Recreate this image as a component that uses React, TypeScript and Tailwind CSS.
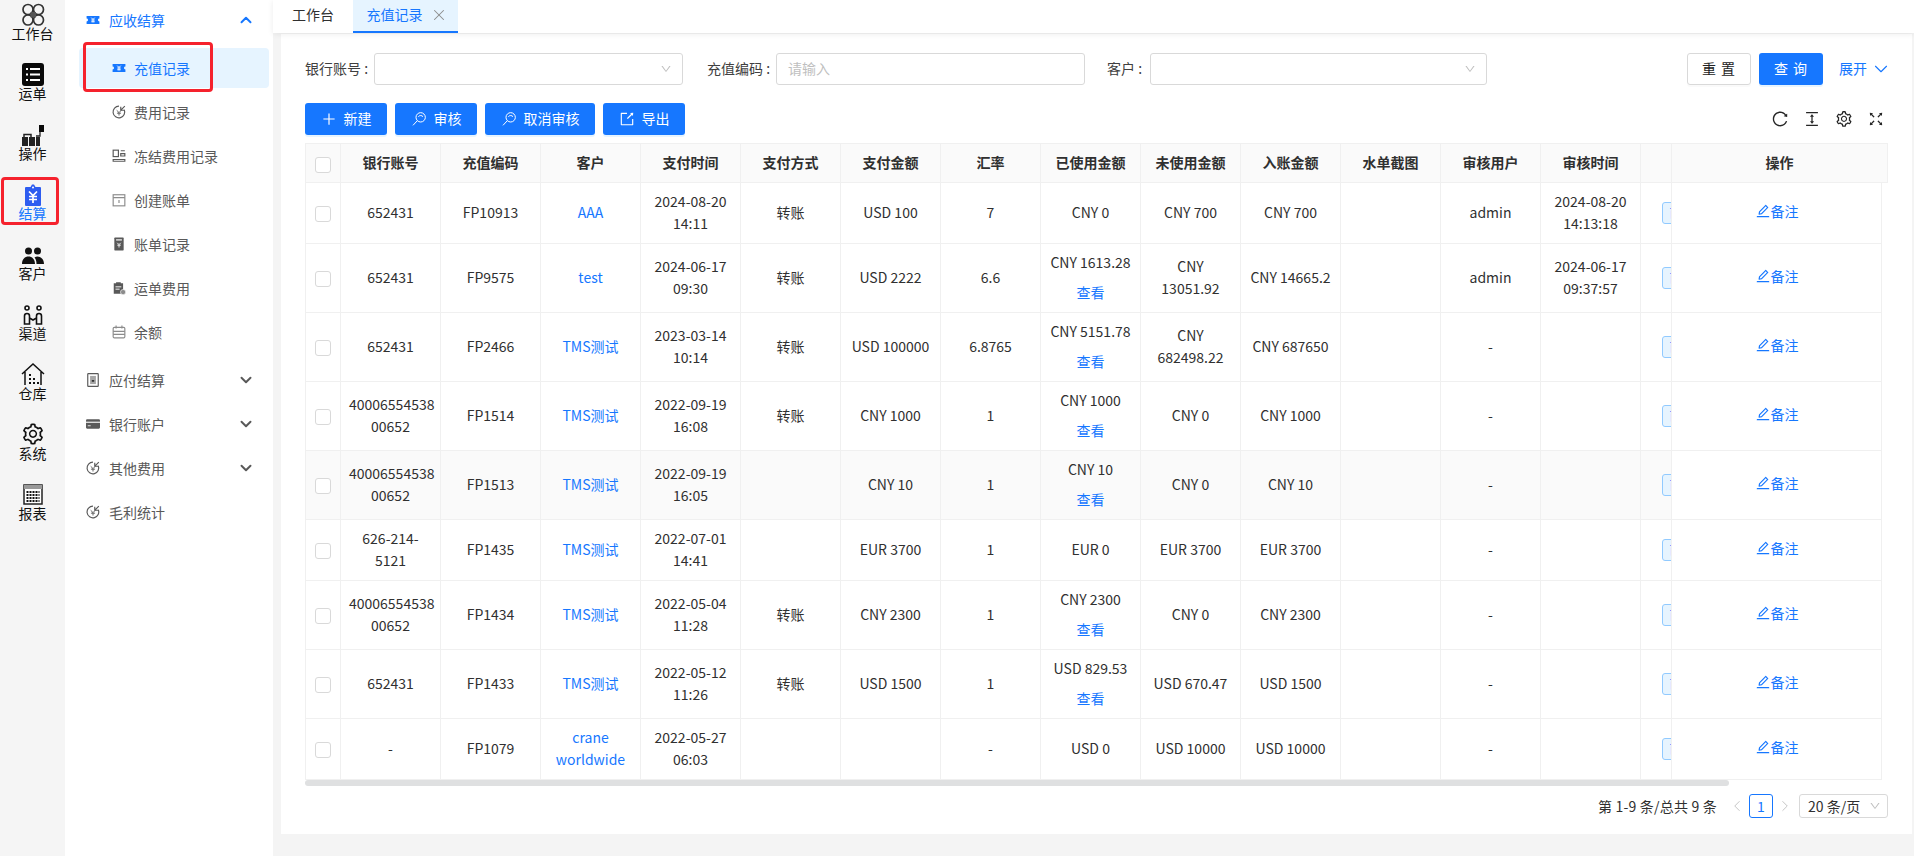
import { ChevronDown, ChevronUp, X, ChevronLeft, ChevronRight } from 'lucide-react';
import { AiOutlineColumnHeight, AiOutlineDown, AiOutlineEdit, AiOutlineExport, AiOutlineFullscreen, AiOutlinePlus, AiOutlineReload, AiOutlineSetting } from 'react-icons/ai';
import type { ReactNode } from 'react';

function Svg({ children, size = 24, className = '' }: { children: ReactNode; size?: number; className?: string }) {
  return (
    <svg width={size} height={size} viewBox="0 0 24 24" fill="none" className={className}>
      {children}
    </svg>
  );
}

const railIcons: Record<string, ReactNode> = {
  workbench: (
    <Svg>
      <circle cx="7" cy="7.5" r="5" stroke="#333" strokeWidth="1.7" />
      <circle cx="17.5" cy="7.5" r="5" stroke="#333" strokeWidth="1.7" />
      <circle cx="7" cy="18" r="5" stroke="#333" strokeWidth="1.7" />
      <circle cx="17.5" cy="18" r="5" stroke="#333" strokeWidth="1.7" />
      <rect x="9.5" y="10" width="5.5" height="5.5" fill="#555" />
    </Svg>
  ),
  waybill: (
    <Svg>
      <rect x="1" y="1" width="22" height="23" rx="3" fill="#0a0a0a" />
      <path d="M5 7h2M9 7h10M5 12.5h2M9 12.5h10M5 18h2M9 18h10" stroke="#fff" strokeWidth="2" />
    </Svg>
  ),
  operate: (
    <Svg>
      <rect x="18" y="3" width="5" height="7" fill="#0a0a0a" />
      <path d="M19 10v4H15" stroke="#222" strokeWidth="1.3" />
      <path d="M1 24v-9h6v9zM8 24v-9h6v9zM15 24v-9h4v9z" fill="#222" />
      <path d="M3 15v-2.5h7V15" stroke="#222" strokeWidth="1.5" />
    </Svg>
  ),
  settle: (
    <Svg>
      <path d="M5 5h4.5l1.500-2.500h2L14.500 5H19a1 1 0 0 1 1 1v17a1 1 0 0 1-1 1H5a1 1 0 0 1-1-1V6a1 1 0 0 1 1-1z" fill="#2d5cf0" />
      <circle cx="12" cy="5.5" r="1" fill="#fff" />
      <path d="M8 9.5l4 4 4-4M12 13.5V21M8 14.5h8M8 17.5h8" stroke="#fff" strokeWidth="1.7" />
    </Svg>
  ),
  customer: (
    <Svg>
      <circle cx="7.5" cy="9" r="3.5" fill="#111" />
      <circle cx="16.5" cy="9" r="3.5" fill="#111" />
      <path d="M1 22c0-5 3-7.5 6.5-7.5S14 17 14 22H1zM15.500 22c0-3-.7-5-2-6.500 4-2.500 9.500.5 9.500 6.500h-7.500z" fill="#111" />
    </Svg>
  ),
  channel: (
    <Svg>
      <circle cx="6" cy="6" r="2" stroke="#111" strokeWidth="1.6" />
      <circle cx="18" cy="6" r="2" stroke="#111" strokeWidth="1.6" />
      <path d="M3.5 22v-8a2.5 2.5 0 0 1 5 0v8zM15.5 22v-8a2.5 2.5 0 0 1 5 0v8zM8.5 16l3.5 2 3.5-2" stroke="#111" strokeWidth="1.6" />
    </Svg>
  ),
  warehouse: (
    <Svg>
      <path d="M1 12L12 2l11 10M4 10v13M20 10v13" stroke="#111" strokeWidth="1.5" />
      <path d="M8 12h2v2H8zM8 16h2v2H8zM12 16h2v2h-2zM8 20h2v2H8zM12 20h2v2h-2zM16 20h2v2h-2z" fill="#111" />
    </Svg>
  ),
  system: <AiOutlineSetting size={24} color="#111" />,
  report: (
    <Svg>
      <rect x="3" y="3" width="18" height="19" fill="#fff" stroke="#222" strokeWidth="1.5" />
      <rect x="3" y="3" width="18" height="4" fill="#999" />
      <path d="M5.5 10h13M5.5 13h13M5.5 16h13M5.5 19h13" stroke="#111" strokeWidth="1.8" strokeDasharray="2 1" />
    </Svg>
  ),
};

const rail = [
  { key: 'workbench', label: '工作台' },
  { key: 'waybill', label: '运单' },
  { key: 'operate', label: '操作' },
  { key: 'settle', label: '结算', active: true },
  { key: 'customer', label: '客户' },
  { key: 'channel', label: '渠道' },
  { key: 'warehouse', label: '仓库' },
  { key: 'system', label: '系统' },
  { key: 'report', label: '报表' },
];

function MenuIcon({ kind, active }: { kind: string; active?: boolean }) {
  const c = active ? '#1677ff' : '#595959';
  if (kind === 'ticket')
    return (
      <Svg size={14}>
        <path d="M1 5h22v4.5a2.5 2.5 0 0 0 0 5V19H1v-4.5a2.5 2.5 0 0 0 0-5z" fill={c} />
        <path d="M9 8l3 3 3-3M12 11v5M9 12h6M9 15h6" stroke="#fff" strokeWidth="1.6" />
      </Svg>
    );
  if (kind === 'back')
    return (
      <Svg size={14}>
        <path d="M21 8a10 10 0 1 1-9-6" stroke={c} strokeWidth="2" />
        <path d="M22 2l-6 6M15 3v6h6" stroke={c} strokeWidth="2" />
        <path d="M8 9l4 4 4-4M12 13v5M8.5 14h7" stroke={c} strokeWidth="1.6" />
      </Svg>
    );
  if (kind === 'freeze')
    return (
      <Svg size={14}>
        <rect x="2" y="2" width="9" height="11" stroke={c} strokeWidth="2" />
        <path d="M15 3h7M15 8h7v4h-7zM2 18h20v3H2z" stroke={c} strokeWidth="2" />
      </Svg>
    );
  if (kind === 'bill')
    return (
      <Svg size={14}>
        <rect x="2" y="3" width="20" height="19" stroke="#8c8c8c" strokeWidth="2" />
        <path d="M2 8h20M12 12v5" stroke="#8c8c8c" strokeWidth="2" />
      </Svg>
    );
  if (kind === 'record')
    return (
      <Svg size={14}>
        <rect x="4" y="1" width="16" height="22" rx="1" fill="#595959" />
        <rect x="7" y="4" width="10" height="2" fill="#fff" />
        <path d="M9 10l3 3 3-3M12 13v5M9 14h6" stroke="#fff" strokeWidth="1.5" />
      </Svg>
    );
  if (kind === 'waybill')
    return (
      <Svg size={14}>
        <path d="M3 4h4V2h8v2h4v18H3z" fill="#595959" />
        <path d="M6 10h10M6 14h7" stroke="#fff" strokeWidth="1.6" />
        <circle cx="19" cy="19" r="4.5" fill="#8c8c8c" stroke="#fff" />
      </Svg>
    );
  if (kind === 'balance')
    return (
      <Svg size={14}>
        <rect x="2" y="4" width="20" height="18" rx="2" stroke="#8c8c8c" strokeWidth="2" />
        <path d="M7 1v5M17 1v5M2 11h20M2 16h20" stroke="#8c8c8c" strokeWidth="2" />
      </Svg>
    );
  if (kind === 'payable')
    return (
      <Svg size={14}>
        <rect x="3" y="1" width="18" height="22" rx="1" stroke="#595959" strokeWidth="2" />
        <rect x="7" y="5" width="10" height="14" fill="#a6a6a6" />
        <path d="M10 12h4v3h-4z" fill="#333" />
      </Svg>
    );
  return (
    <Svg size={14}>
      <rect x="0" y="4" width="24" height="16" rx="2" fill="#595959" />
      <rect x="0" y="8" width="24" height="2" fill="#f5f5f5" />
      <path d="M3 15h5" stroke="#f5f5f5" strokeWidth="1.5" />
    </Svg>
  );
}

const subItems = [
  { label: '充值记录', icon: 'ticket', active: true },
  { label: '费用记录', icon: 'back' },
  { label: '冻结费用记录', icon: 'freeze' },
  { label: '创建账单', icon: 'bill' },
  { label: '账单记录', icon: 'record' },
  { label: '运单费用', icon: 'waybill' },
  { label: '余额', icon: 'balance' },
];

const groups = [
  { label: '应付结算', icon: 'payable', arrow: true },
  { label: '银行账户', icon: 'card', arrow: true },
  { label: '其他费用', icon: 'back', arrow: true },
  { label: '毛利统计', icon: 'back', arrow: false },
];

const columns = ['银行账号', '充值编码', '客户', '支付时间', '支付方式', '支付金额', '汇率', '已使用金额', '未使用金额', '入账金额', '水单截图', '审核用户', '审核时间'];

type Row = { bank: string; code: string; customer: string; paid: string; method: string; amount: string; rate: string; used: string; view?: boolean; unused: string; credited: string; user: string; auditTime: string };

const rows: Row[] = [
  { bank: '652431', code: 'FP10913', customer: 'AAA', paid: '2024-08-20\n14:11', method: '转账', amount: 'USD 100', rate: '7', used: 'CNY 0', unused: 'CNY 700', credited: 'CNY 700', user: 'admin', auditTime: '2024-08-20\n14:13:18' },
  { bank: '652431', code: 'FP9575', customer: 'test', paid: '2024-06-17\n09:30', method: '转账', amount: 'USD 2222', rate: '6.6', used: 'CNY 1613.28', view: true, unused: 'CNY\n13051.92', credited: 'CNY 14665.2', user: 'admin', auditTime: '2024-06-17\n09:37:57' },
  { bank: '652431', code: 'FP2466', customer: 'TMS测试', paid: '2023-03-14\n10:14', method: '转账', amount: 'USD 100000', rate: '6.8765', used: 'CNY 5151.78', view: true, unused: 'CNY\n682498.22', credited: 'CNY 687650', user: '-', auditTime: '' },
  { bank: '40006554538\n00652', code: 'FP1514', customer: 'TMS测试', paid: '2022-09-19\n16:08', method: '转账', amount: 'CNY 1000', rate: '1', used: 'CNY 1000', view: true, unused: 'CNY 0', credited: 'CNY 1000', user: '-', auditTime: '' },
  { bank: '40006554538\n00652', code: 'FP1513', customer: 'TMS测试', paid: '2022-09-19\n16:05', method: '', amount: 'CNY 10', rate: '1', used: 'CNY 10', view: true, unused: 'CNY 0', credited: 'CNY 10', user: '-', auditTime: '' },
  { bank: '626-214-\n5121', code: 'FP1435', customer: 'TMS测试', paid: '2022-07-01\n14:41', method: '', amount: 'EUR 3700', rate: '1', used: 'EUR 0', unused: 'EUR 3700', credited: 'EUR 3700', user: '-', auditTime: '' },
  { bank: '40006554538\n00652', code: 'FP1434', customer: 'TMS测试', paid: '2022-05-04\n11:28', method: '转账', amount: 'CNY 2300', rate: '1', used: 'CNY 2300', view: true, unused: 'CNY 0', credited: 'CNY 2300', user: '-', auditTime: '' },
  { bank: '652431', code: 'FP1433', customer: 'TMS测试', paid: '2022-05-12\n11:26', method: '转账', amount: 'USD 1500', rate: '1', used: 'USD 829.53', view: true, unused: 'USD 670.47', credited: 'USD 1500', user: '-', auditTime: '' },
  { bank: '-', code: 'FP1079', customer: 'crane\nworldwide', paid: '2022-05-27\n06:03', method: '', amount: '', rate: '-', used: 'USD 0', unused: 'USD 10000', credited: 'USD 10000', user: '-', auditTime: '' },
];

const td = 'border-b border-r border-[#f0f0f0] px-2 pt-[7px] pb-[9px] text-center align-middle whitespace-pre-line leading-[22px]';

function Checkbox() {
  return <span className="inline-block w-4 h-4 bg-white border border-[#d9d9d9] rounded-[3px] align-middle" />;
}

function SelectBox({ className }: { className: string }) {
  return (
    <div className={`h-8 border border-[#d9d9d9] rounded-[3px] bg-white flex items-center justify-end pr-[10px] ${className}`}>
      <AiOutlineDown size={12} className="text-[#bfbfbf]" />
    </div>
  );
}

function ToolButton({ icon, label, className }: { icon: ReactNode; label: string; className: string }) {
  return (
    <button className={`h-8 bg-[#1677ff] text-white rounded-[3px] flex items-center justify-center gap-[7px] shadow-[0_2px_0_rgba(5,145,255,0.1)] ${className}`}>
      {icon}
      <span className="pb-[2px]">{label}</span>
    </button>
  );
}

const searchIcon = (
  <svg width="16" height="16" viewBox="0 0 24 24" fill="none" stroke="#fff" strokeWidth="1.5">
    <circle cx="14.5" cy="9.5" r="7" />
    <path d="M9.5 14.500L3 21.500M11 8.500a4.500 4.500 0 0 1 7 0" />
  </svg>
);

export default function App() {
  return (
    <div className="w-[1914px] h-[856px] flex overflow-hidden bg-[#f4f4f4] text-[14px] text-[#303030] relative" style={{ fontFamily: '"Noto Sans CJK SC", "Noto Sans", sans-serif' }}>
      <aside className="w-[65px] shrink-0 bg-[#f5f5f5] flex flex-col items-center">
        {rail.map((item) => (
          <div key={item.key} className={`h-[60px] w-full flex flex-col items-center pt-[2px] leading-5 ${item.active ? 'text-[#1677ff]' : 'text-[#111]'}`}>
            {railIcons[item.key]}
            <span className="-mt-[3px]">{item.label}</span>
          </div>
        ))}
      </aside>

      <nav className="w-[208px] shrink-0 bg-white text-[#595959]">
        <div className="h-10 flex items-center pl-[21px] pr-[18px] text-[#1677ff]">
          <MenuIcon kind="ticket" active />
          <span className="ml-[9px] flex-1">应收结算</span>
          <ChevronUp size={18} strokeWidth={2.6} />
        </div>
        <div className="mt-2 flex flex-col gap-1 ml-[14px] mr-1">
          {subItems.map((s) => (
            <div key={s.label} className={`h-10 rounded-[4px] flex items-center pl-[33px] gap-2 ${s.active ? 'bg-[#e6f4ff] text-[#1677ff]' : ''}`}>
              <MenuIcon kind={s.icon} active={s.active} />
              <span>{s.label}</span>
            </div>
          ))}
        </div>
        <div className="mt-2 flex flex-col gap-1">
          {groups.map((g) => (
            <div key={g.label} className="h-10 flex items-center pl-[21px] pr-[18px]">
              <MenuIcon kind={g.icon} />
              <span className="ml-[9px] flex-1">{g.label}</span>
              {g.arrow && <ChevronDown size={18} strokeWidth={2.6} />}
            </div>
          ))}
        </div>
      </nav>

      <main className="flex-1 min-w-0 flex flex-col">
        <header className="h-[33px] bg-white flex shadow-[0_1px_6px_rgba(0,0,0,0.08)] relative z-10">
          <div className="w-20 flex items-center justify-center pb-1">工作台</div>
          <div className="w-[105px] flex items-center justify-center gap-[10px] pb-[2px] bg-[#e6f4ff] text-[#1677ff] border-b-2 border-[#1677ff]">
            <span>充值记录</span>
            <X size={18} strokeWidth={1.4} className="text-[#8c8c8c] -mx-[3px]" />
          </div>
        </header>

        <section className="ml-2 mr-[2px] mt-px h-[800px] bg-white pt-[19px] px-6">
          <div className="flex items-center h-8">
            <label className="w-[69px] whitespace-nowrap text-[#404040] pb-[2px]">银行账号 :</label>
            <SelectBox className="w-[309px]" />
            <label className="w-[69px] ml-6 whitespace-nowrap text-[#404040] pb-[2px]">充值编码 :</label>
            <div className="w-[309px] h-8 border border-[#d9d9d9] rounded-[3px] px-[11px] pb-[2px] flex items-center text-[#bfbfbf]">请输入</div>
            <label className="w-[43px] ml-[22px] whitespace-nowrap text-[#404040] pb-[2px]">客户 :</label>
            <SelectBox className="w-[337px]" />
            <button className="ml-auto w-16 h-8 pb-[2px] border border-[#d9d9d9] rounded-[3px] text-[#222] tracking-[1px] shadow-[0_2px_0_rgba(0,0,0,0.02)]">重 置</button>
            <button className="ml-2 w-16 h-8 pb-[2px] bg-[#1677ff] text-white rounded-[3px] tracking-[1px] shadow-[0_2px_0_rgba(5,145,255,0.1)]">查 询</button>
            <div className="ml-4 flex items-center gap-[3px] -mr-1 text-[#1677ff]">
              <span className="pb-[2px]">展开</span>
              <ChevronDown size={22} strokeWidth={1.2} />
            </div>
          </div>

          <div className="flex items-center h-8 mt-[18px] gap-2">
            <ToolButton icon={<AiOutlinePlus size={16} />} label="新建" className="w-[82px]" />
            <ToolButton icon={searchIcon} label="审核" className="w-[82px]" />
            <ToolButton icon={searchIcon} label="取消审核" className="w-[110px]" />
            <ToolButton icon={<AiOutlineExport size={16} />} label="导出" className="w-[82px]" />
            <div className="ml-auto flex items-center gap-[14px] pr-[3px] text-[#262626]">
              <AiOutlineReload size={18} />
              <AiOutlineColumnHeight size={18} />
              <AiOutlineSetting size={18} />
              <AiOutlineFullscreen size={18} />
            </div>
          </div>

          <table className="mt-2 table-fixed border-separate border-spacing-0 w-[1583px]">
            <colgroup>
              <col className="w-[36px]" />
              {columns.map((c) => (
                <col key={c} className="w-[100px]" />
              ))}
              <col className="w-[31px]" />
              <col className="w-[210px]" />
              <col className="w-[6px]" />
            </colgroup>
            <thead>
              <tr className="bg-[#fafafa]">
                <th className="h-10 border-y border-r border-l border-[#f0f0f0] text-center font-normal"><Checkbox /></th>
                {columns.map((c) => (
                  <th key={c} className="border-y border-r border-[#f0f0f0] pb-[2px] text-center font-semibold">{c}</th>
                ))}
                <th className="border-y border-r border-[#f0f0f0]" />
                <th colSpan={2} className="border-y border-r border-[#f0f0f0] pb-[2px] text-center font-semibold">操作</th>
              </tr>
            </thead>
            <tbody>
              {rows.map((r, i) => (
                <tr key={r.code} className={i === 4 ? 'bg-[#fafafa]' : ''}>
                  <td className={`${td} border-l`}><Checkbox /></td>
                  <td className={td}>{r.bank}</td>
                  <td className={td}>{r.code}</td>
                  <td className={`${td} text-[#1677ff]`}>{r.customer}</td>
                  <td className={td}>{r.paid}</td>
                  <td className={td}>{r.method}</td>
                  <td className={td}>{r.amount}</td>
                  <td className={td}>{r.rate}</td>
                  <td className={td}>
                    {r.used}
                    {r.view && <div className="h-[30px] pt-2 leading-[22px] text-[#1677ff]">查看</div>}
                  </td>
                  <td className={td}>{r.unused}</td>
                  <td className={td}>{r.credited}</td>
                  <td className={td} />
                  <td className={td}>{r.user}</td>
                  <td className={td}>{r.auditTime}</td>
                  <td className={`${td} !p-0 overflow-hidden`}>
                    <div className="ml-[21px] w-[60px] h-[22px] bg-[#e6f4ff] border border-[#91caff] rounded-[3px] text-left pl-[6px] text-[#1677ff] leading-5 whitespace-nowrap">已审核</div>
                  </td>
                  <td className={`${td} bg-white`}>
                    <span className="inline-flex items-center text-[#1677ff]">
                      <AiOutlineEdit size={16} />
                      备注
                    </span>
                  </td>
                </tr>
              ))}
            </tbody>
          </table>
          <div className="h-1.5 w-[1424px] rounded-full bg-[#dfe0e1]" />

          <div className="mt-2 flex items-center justify-end h-6">
            <span className="tracking-[0.2px]">第 1-9 条/总共 9 条</span>
            <ChevronLeft size={18} strokeWidth={1.2} className="ml-[11px] text-[#bfbfbf]" />
            <span className="ml-[3px] w-6 h-6 border border-[#1677ff] rounded-[3px] text-[#1677ff] flex items-center justify-center">1</span>
            <ChevronRight size={18} strokeWidth={1.2} className="ml-[3px] text-[#bfbfbf]" />
            <div className="ml-[5px] w-[89px] h-6 border border-[#d9d9d9] rounded-[3px] flex items-center justify-between pl-2 pr-[6px]">
              <span>20 条/页</span>
              <AiOutlineDown size={12} className="text-[#bfbfbf]" />
            </div>
          </div>
        </section>
      </main>

      <div className="absolute left-[1px] top-[177px] w-[58px] h-[48px] border-[3px] border-[#f5222d] rounded-[4px] pointer-events-none" />
      <div className="absolute left-[83px] top-[42px] w-[130px] h-[50px] border-[3px] border-[#f5222d] rounded-[4px] pointer-events-none" />
    </div>
  );
}
